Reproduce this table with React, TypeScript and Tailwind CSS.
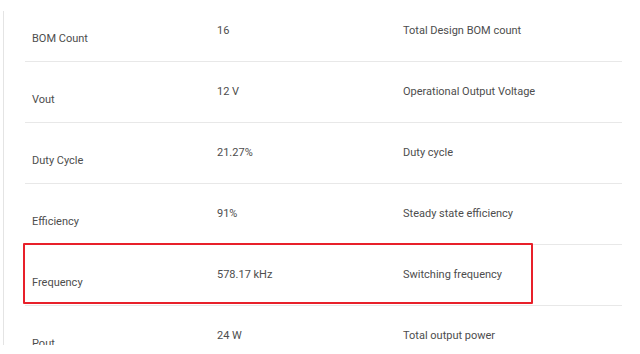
import React from "react";

const rows = [
  { name: "BOM Count", value: "16", desc: "Total Design BOM count" },
  { name: "Vout", value: "12 V", desc: "Operational Output Voltage" },
  { name: "Duty Cycle", value: "21.27%", desc: "Duty cycle" },
  { name: "Efficiency", value: "91%", desc: "Steady state efficiency" },
  { name: "Frequency", value: "578.17 kHz", desc: "Switching frequency", highlight: true },
  { name: "Pout", value: "24 W", desc: "Total output power" },
];

export default function App() {
  return (
    <div
      className="w-[640px] h-[354px] bg-white text-[11px] text-[#4d4d4d]"
      style={{ fontFamily: "Roboto, 'Liberation Sans', sans-serif" }}
    >
      <div className="flex h-[345px] overflow-hidden">
        <div className="w-[25px] shrink-0 pl-[3px] pt-[11px]">
          <div className="w-px h-[334px] bg-[#e4e4e4]" />
        </div>
        <div className="w-[597px] pt-px">
          {rows.map((r) => (
            <div
              key={r.name}
              className="relative flex items-center h-[61px] border-b border-[#e8e8e8]"
            >
              <div className="w-[192px] shrink-0 pl-[7px] pt-[16px]">{r.name}</div>
              <div className="w-[186px] shrink-0">{r.value}</div>
              <div className="flex-1">{r.desc}</div>
              {r.highlight && (
                <div className="absolute left-[-2px] top-[-2px] w-[510px] h-[61px] border-2 border-[#e8202a] rounded-[1px]" />
              )}
            </div>
          ))}
        </div>
      </div>
    </div>
  );
}
